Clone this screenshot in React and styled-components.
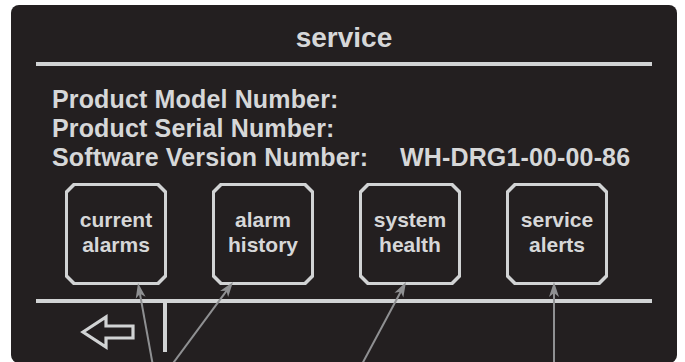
import styled, { createGlobalStyle } from "styled-components";

const GlobalStyle = createGlobalStyle`
  html, body {
    margin: 0;
    padding: 0;
    background: #ffffff;
  }
  body {
    font-family: "Liberation Sans", Arial, sans-serif;
  }
`;

const Page = styled.div`
  position: relative;
  width: 685px;
  height: 362px;
  overflow: hidden;
  padding: 5px 0 0 11px;
  box-sizing: border-box;
`;

const Panel = styled.div`
  width: 666px;
  height: 358px;
  background: #231f20;
  border-radius: 8px;
  color: #d6d7d8;
  display: flex;
  flex-direction: column;
`;

const Title = styled.h1`
  margin: 19px 0 0;
  font-size: 28px;
  line-height: 28px;
  font-weight: bold;
  text-align: center;
`;

const Rule = styled.div`
  height: 4px;
  margin: ${(p) => p.$top}px 25px 0;
  background: #d1d3d4;
`;

const Info = styled.div`
  display: grid;
  grid-template-columns: 348px auto;
  margin-top: 19px;
  padding-left: 41px;
  font-size: 25px;
  line-height: 29px;
  font-weight: bold;
  letter-spacing: 0.15px;
`;

const ButtonRow = styled.div`
  display: flex;
  gap: 45px;
  margin-top: 11px;
  padding-left: 54px;
`;

const chamfer = (c) => `polygon(
  ${c}px 0, calc(100% - ${c}px) 0, 100% ${c}px, 100% calc(100% - ${c}px),
  calc(100% - ${c}px) 100%, ${c}px 100%, 0 calc(100% - ${c}px), 0 ${c}px
)`;

const ServiceButton = styled.div`
  width: 102px;
  height: 102px;
  padding: 3px;
  box-sizing: border-box;
  background: #d1d3d4;
  clip-path: ${chamfer(8)};
`;

const ButtonFace = styled.div`
  height: 100%;
  background: #231f20;
  clip-path: ${chamfer(7)};
  display: flex;
  align-items: center;
  justify-content: center;
  padding-bottom: 4px;
  box-sizing: border-box;
  text-align: center;
  font-size: 21px;
  line-height: 25px;
  font-weight: bold;
  color: #d6d7d8;
`;

const BottomBar = styled.div`
  display: flex;
  align-items: flex-start;
  padding-left: 69px;
`;

const BackArrow = styled.svg`
  margin-top: 11px;
`;

const Divider = styled.div`
  width: 4px;
  height: 49px;
  margin-left: 27px;
  background: #d1d3d4;
`;

const Callouts = styled.svg`
  position: absolute;
  top: 0;
  left: 0;
  pointer-events: none;
`;

const buttons = [
  ["current", "alarms"],
  ["alarm", "history"],
  ["system", "health"],
  ["service", "alerts"],
];

const callouts = [
  [153, 366, 138, 283],
  [171, 366, 233, 282],
  [361, 366, 406, 282],
  [554, 366, 554, 282],
];

function Callout({ line }) {
  const [x1, y1, x2, y2] = line;
  const len = Math.hypot(x2 - x1, y2 - y1);
  const dx = (x2 - x1) / len;
  const dy = (y2 - y1) / len;
  const bx = x2 - dx * 15;
  const by = y2 - dy * 15;
  const nx = -dy;
  const ny = dx;
  const head = [
    [x2, y2],
    [bx + nx * 5, by + ny * 5],
    [x2 - dx * 11, y2 - dy * 11],
    [bx - nx * 5, by - ny * 5],
  ]
    .map((p) => p.join(","))
    .join(" ");
  return (
    <g>
      <line x1={x1} y1={y1} x2={x2 - dx * 10} y2={y2 - dy * 10} stroke="#8f9092" strokeWidth="2" />
      <polygon points={head} fill="#8f9092" />
    </g>
  );
}

export default function App() {
  return (
    <>
      <GlobalStyle />
      <Page>
        <Panel>
          <Title>service</Title>
          <Rule $top={10} />
          <Info>
            <span>Product Model Number:</span>
            <span />
            <span>Product Serial Number:</span>
            <span />
            <span>Software Version Number:</span>
            <span>WH-DRG1-00-00-86</span>
          </Info>
          <ButtonRow>
            {buttons.map(([a, b]) => (
              <ServiceButton key={a + b}>
                <ButtonFace>
                  {a}
                  <br />
                  {b}
                </ButtonFace>
              </ServiceButton>
            ))}
          </ButtonRow>
          <Rule $top={14} />
          <BottomBar>
            <BackArrow width="56" height="36" viewBox="0 0 56 36">
              <path
                d="M3 18 L26 3 L26 12 L53 12 L53 24 L26 24 L26 33 Z"
                fill="none"
                stroke="#d1d3d4"
                strokeWidth="3.2"
                strokeLinejoin="miter"
              />
            </BackArrow>
            <Divider />
          </BottomBar>
        </Panel>
        <Callouts width="685" height="362" viewBox="0 0 685 362">
          {callouts.map((l) => (
            <Callout key={l.join("-")} line={l} />
          ))}
        </Callouts>
      </Page>
    </>
  );
}
